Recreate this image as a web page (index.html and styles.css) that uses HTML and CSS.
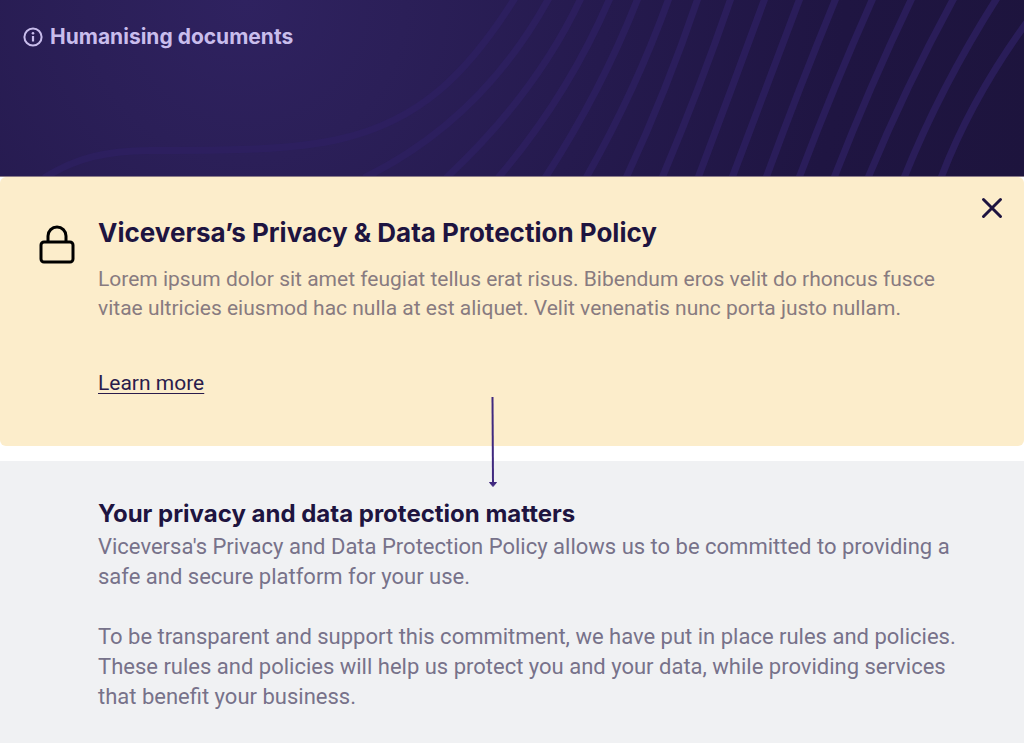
FILE: index.html
```html
<!DOCTYPE html>
<html lang="en">
<head>
<meta charset="utf-8">
<meta name="viewport" content="width=device-width, initial-scale=1">
<title>Humanising documents</title>
<link rel="stylesheet" href="styles.css">
</head>
<body>
<header class="hero">
  <svg class="hero-waves" viewBox="0 0 1024 176" preserveAspectRatio="none" aria-hidden="true">
    <path d="M44 178C76 158 105 151 150 150.500C205 150 285 152 340 139C420 121 468 73 515 -2"/>
    <path d="M364 178Q482 120 549 -2"/>
    <path d="M446 178Q536 94 581 -2"/>
    <path d="M498 178Q568 96 610 -2"/>
    <path d="M545 178Q602 90 638 -2"/>
    <path d="M586 178Q636 90 669 -2"/>
    <path d="M626 178Q667 90 698 -2"/>
    <path d="M662 178Q700 88 731 -2"/>
    <path d="M698 178Q732 88 765 -2"/>
    <path d="M732 178Q766 88 800 -2"/>
    <path d="M766 178Q799 88 836 -2"/>
    <path d="M799 178Q833 88 873 -2"/>
    <path d="M834 178Q869 88 912 -2"/>
    <path d="M868 178Q905 88 954 -2"/>
    <path d="M904 178Q940 88 997 -2"/>
    <path d="M941 178Q975 88 1045 -2"/>
  </svg>
  <div class="hero-label">
    <svg class="info-icon" viewBox="0 0 20 20" aria-hidden="true">
      <circle cx="10" cy="10" r="8.600" fill="none" stroke="currentColor" stroke-width="2"/>
      <circle cx="10" cy="6.300" r="1.300" fill="currentColor"/>
      <path d="M10 9v5.500" fill="none" stroke="currentColor" stroke-width="2.200"/>
    </svg>
    <h1 class="hero-title">Humanising documents</h1>
  </div>
</header>
<main>
  <section class="notice">
    <svg class="lock-icon" viewBox="0 0 36 40" aria-hidden="true">
      <rect x="2" y="17" width="32" height="20" rx="3"/>
      <path d="M9 17V11a9 9 0 0 1 18 0v6"/>
    </svg>
    <div class="notice-body">
      <h2 class="title">Viceversa’s Privacy &amp; Data Protection Policy</h2>
      <p class="copy notice-copy">Lorem ipsum dolor sit amet feugiat tellus erat risus. Bibendum eros velit do rhoncus fusce vitae ultricies eiusmod hac nulla at est aliquet. Velit venenatis nunc porta justo nullam.</p>
      <a class="learn-more" href="#details">Learn more</a>
    </div>
    <button class="close" type="button" aria-label="Close">
      <svg viewBox="0 0 22 22" aria-hidden="true"><path d="M2.500 2.500l17 17M19.500 2.500l-17 17"/></svg>
    </button>
    <svg class="arrow" viewBox="0 0 10 92" aria-hidden="true">
      <path d="M4.500 1L5 88" fill="none" stroke="currentColor" stroke-width="2"/>
      <path d="M1.500 86.500h7L5 90.500z" fill="currentColor" stroke="currentColor" stroke-width="1" stroke-linejoin="round"/>
    </svg>
  </section>
  <section class="details" id="details">
    <h2 class="title details-title">Your privacy and data protection matters</h2>
    <p class="copy">Viceversa's Privacy and Data Protection Policy allows us to be committed to providing a safe and secure platform for your use.</p>
    <p class="copy">To be transparent and support this commitment, we have put in place rules and policies. These rules and policies will help us protect you and your data, while providing services that benefit your business.</p>
  </section>
</main>
</body>
</html>
```
FILE: styles.css
```css
* {
  box-sizing: border-box;
}

body {
  margin: 0;
  min-height: 100vh;
  display: flex;
  flex-direction: column;
  background: #fff;
  color: #1e1440;
  font-family: Roboto, "Liberation Sans", sans-serif;
}

h1, h2, p {
  margin: 0;
}

main {
  flex: 1;
  display: flex;
  flex-direction: column;
}

.hero {
  position: relative;
  min-height: 177px;
  padding: 23px;
  border-bottom: 1px solid #8b7b88;
  background: radial-gradient(circle at 24% 0, #2f2260 0, #2b1f58 20%, #251a4e 45%, #1f1542 75%, #1d143d 100%);
}

.hero-waves {
  position: absolute;
  inset: 0;
  width: 100%;
  height: 100%;
  fill: none;
  stroke: #2e2062;
  stroke-width: 7px;
  opacity: 0.75;
}

.hero-label {
  position: relative;
  display: flex;
  align-items: center;
  gap: 7px;
  color: #c9bdec;
}

.info-icon {
  width: 20px;
  height: 20px;
}

.hero-title,
.title {
  font-family: Inter, "Liberation Sans", sans-serif;
  font-weight: 700;
}

.hero-title {
  font-size: 21px;
  line-height: 28px;
}

.title {
  font-size: 26px;
  line-height: 32px;
}

.notice {
  position: relative;
  display: flex;
  gap: 23px;
  min-height: 269px;
  padding: 40px 80px 45px 39px;
  border-radius: 6px;
  background: #fcedcb;
}

.lock-icon {
  flex: none;
  width: 36px;
  height: 40px;
  margin-top: 8px;
  fill: none;
  stroke: #000;
  stroke-width: 3px;
}

.copy {
  font-size: 22px;
  line-height: 30px;
  color: #77728a;
}

.notice-copy {
  margin: 16px 0 45px;
  font-size: 21px;
  line-height: 29px;
  color: #887b80;
}

.learn-more {
  font-size: 21px;
  line-height: 30px;
  color: #2a1c4c;
  text-decoration-thickness: 1px;
  text-underline-offset: 3px;
}

.close {
  position: absolute;
  top: 20px;
  right: 21px;
  width: 22px;
  height: 22px;
  padding: 0;
  border: 0;
  background: none;
  cursor: pointer;
}

.close svg {
  display: block;
  fill: none;
  stroke: #1e1440;
  stroke-width: 3px;
  stroke-linecap: round;
}

.arrow {
  position: absolute;
  top: 219px;
  left: 48%;
  width: 10px;
  height: 92px;
  margin-left: -4px;
  color: #40297f;
}

.details {
  flex: 1;
  margin-top: 15px;
  padding: 37px 64px 28px 98px;
  background: #f0f1f3;
}

.details-title {
  margin-bottom: 2px;
  font-size: 24px;
}

.copy + .copy {
  margin-top: 30px;
}
```
